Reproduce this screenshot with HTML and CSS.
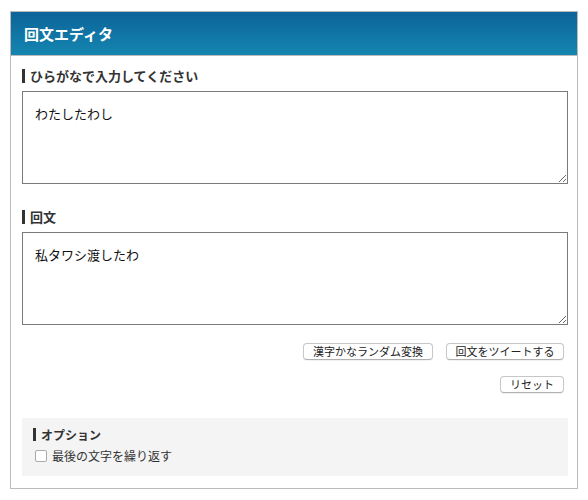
FILE: index.html
```html
<!DOCTYPE html>
<html lang="ja">
  <head>
    <meta charset="UTF-8" />
    <meta name="viewport" content="width=device-width, initial-scale=1.0" />
    <title>回文エディタ</title>
    <link rel="stylesheet" href="styles.css">
  </head>
  <body>
    <div class="container">
      <h1 class="title">回文エディタ</h1>
      <div class="content">
        <h2 class="label">ひらがなで入力してください</h2>
        <textarea id="input" class="field">わたしたわし</textarea>

        <h2 class="label">回文</h2>
        <textarea id="output" class="field">私タワシ渡したわ</textarea>

        <div class="actions">
          <button class="btn btn-convert">漢字かなランダム変換</button>
          <button class="btn btn-tweet">回文をツイートする</button>
        </div>
        <div class="actions reset-row">
          <button class="btn btn-reset">リセット</button>
        </div>

        <div class="options">
          <h2 class="label small">オプション</h2>
          <label class="check">
            <input type="checkbox" id="repeatLast" />
            <span>最後の文字を繰り返す</span>
          </label>
        </div>
      </div>
    </div>
  </body>
</html>
```

FILE: styles.css
```css
body {
  margin: 0;
  padding: 11px 10px;
  font-family: "Noto Sans CJK JP", "Noto Sans", sans-serif;
  color: #333;
  background-color: #fff;
}
.container {
  width: 568px;
  box-sizing: border-box;
  border: 1px solid #bbb;
}
.title {
  margin: 0;
  height: 43px;
  padding-left: 13px;
  font-size: 15px;
  line-height: 43px;
  font-weight: bold;
  color: #fff;
  background: linear-gradient(to bottom, #0c6399, #1486b0);
  border-bottom: 1px solid #bbb;
}
.content {
  padding: 13px 9px 12px 11px;
}
.label {
  margin: 0 0 8px;
  padding-left: 5px;
  border-left: 3px solid #333;
  font-size: 13px;
  line-height: 14px;
  font-weight: bold;
  color: #333;
}
.field {
  display: block;
  width: 100%;
  height: 93px;
  box-sizing: border-box;
  margin: 0 0 26px;
  padding: 12px;
  font-family: "Noto Sans CJK JP", "Noto Sans", sans-serif;
  font-size: 13px;
  line-height: 20px;
  color: #111;
  border: 1px solid #7a7a7a;
  border-radius: 0;
}
#output {
  margin-bottom: 18px;
}
.actions {
  display: flex;
  justify-content: flex-end;
  gap: 13px;
  padding-right: 4px;
}
.reset-row {
  margin-top: 16px;
}
.btn {
  height: 17px;
  box-sizing: border-box;
  padding: 0;
  white-space: nowrap;
  text-align: center;
  font-family: "Noto Sans CJK JP", "Noto Sans", sans-serif;
  font-size: 11px;
  line-height: 15px;
  color: #222;
  background-color: #fff;
  border: 1px solid #c6c6c6;
  border-bottom-color: #b0b0b0;
  border-radius: 4px;
  box-shadow: 0 1px 0 rgba(0, 0, 0, 0.05);
  cursor: pointer;
}
.btn-convert {
  width: 130px;
}
.btn-tweet {
  width: 118px;
}
.btn-reset {
  width: 64px;
}
.options {
  margin-top: 25px;
  padding: 10px 11px 13px;
  background-color: #f4f4f4;
}
.label.small {
  font-size: 12px;
  line-height: 13px;
  margin-bottom: 8px;
}
.check {
  display: flex;
  align-items: center;
  font-size: 12px;
  line-height: 14px;
  color: #333;
}
.check input {
  appearance: none;
  width: 12px;
  height: 12px;
  margin: 0 5px 0 2px;
  background-color: #fff;
  border: 1px solid #aaa;
  border-radius: 2px;
}
```
